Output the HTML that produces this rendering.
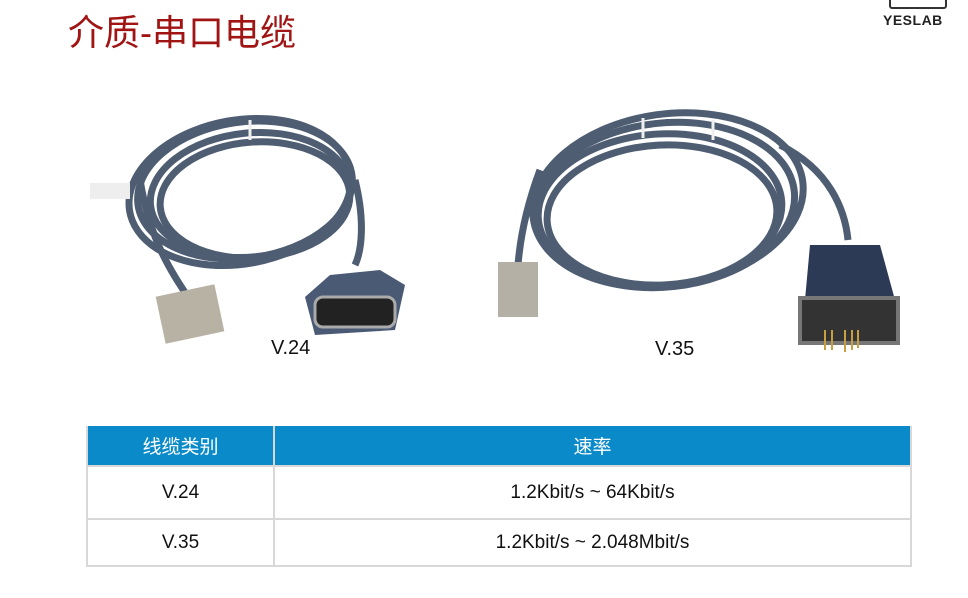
<!DOCTYPE html>
<html><head><meta charset="utf-8"><style>
body{margin:0;width:968px;height:598px;background:#fff;position:relative;overflow:hidden;font-family:"Liberation Sans","Noto Sans CJK SC",sans-serif}
.t{position:absolute;left:68px;top:4px;font-size:36px;color:#a01414}
.logo{position:absolute;left:883px;top:12px;font-size:14px;font-weight:bold;color:#222;letter-spacing:0.5px}
.lb{position:absolute;left:889px;top:-4px;width:54px;height:9px;border:2px solid #333;border-radius:3px}
table{position:absolute;left:86px;top:426px;width:826px;border-collapse:collapse;table-layout:fixed}
td{border:2px solid #d8d8d8;text-align:center;font-size:19px;color:#111;padding:0}
th{background:#0a8ac8;color:#fff;font-weight:normal;font-size:19px;height:39px;border:2px solid #d8d8d8;border-top:none;padding:0}
.cap{position:absolute;font-size:20px;color:#111}
</style></head><body>
<div class="t">介质-串口电缆</div>
<div class="lb"></div><div class="logo">YESLAB</div>
<svg width="968" height="420" style="position:absolute;left:0;top:0">
<g fill="none" stroke="#4e5d72" stroke-width="7">
<ellipse cx="245" cy="190" rx="108" ry="68" transform="rotate(-8 245 190)"/>
<ellipse cx="250" cy="195" rx="100" ry="62" transform="rotate(-6 250 195)"/>
<ellipse cx="240" cy="192" rx="112" ry="72" transform="rotate(-10 240 192)"/>
<ellipse cx="255" cy="200" rx="95" ry="58" transform="rotate(-4 255 200)"/>
<path d="M140 180 C150 240 170 270 190 300"/>
<path d="M355 180 C365 220 362 250 355 265"/>
<ellipse cx="665" cy="205" rx="130" ry="82" transform="rotate(-6 665 205)"/>
<ellipse cx="660" cy="210" rx="122" ry="76" transform="rotate(-4 660 210)"/>
<ellipse cx="668" cy="200" rx="136" ry="86" transform="rotate(-8 668 200)"/>
<ellipse cx="662" cy="215" rx="115" ry="70" transform="rotate(-3 662 215)"/>
<path d="M540 170 C525 210 520 240 518 265"/>
<path d="M780 145 C830 170 845 210 848 240"/>
</g>
<g stroke="#eee" stroke-width="3"><line x1="250" y1="120" x2="250" y2="140"/><line x1="643" y1="118" x2="643" y2="138"/><line x1="713" y1="120" x2="713" y2="140"/></g>
<rect x="90" y="183" width="40" height="16" fill="#eee"/>
<rect x="160" y="290" width="60" height="48" fill="#b8b2a4" transform="rotate(-12 190 314)"/>
<path d="M305 297 L330 275 L380 270 L405 285 L395 330 L315 335 Z" fill="#4a5a74"/>
<rect x="315" y="297" width="80" height="30" rx="8" fill="#222" stroke="#aaa" stroke-width="3"/>
<rect x="498" y="262" width="40" height="55" fill="#b5b0a6"/>
<path d="M810 245 L880 245 L895 300 L805 300 Z" fill="#2c3a55"/>
<rect x="800" y="298" width="98" height="45" fill="#333" stroke="#777" stroke-width="4"/>
<g stroke="#c9a040" stroke-width="2"><line x1="825" y1="330" x2="825" y2="350"/><line x1="832" y1="330" x2="832" y2="350"/><line x1="845" y1="330" x2="845" y2="352"/><line x1="852" y1="330" x2="852" y2="350"/><line x1="858" y1="330" x2="858" y2="348"/></g>
</svg>
<div class="cap" style="left:271px;top:337px">V.24</div>
<div class="cap" style="left:655px;top:338px">V.35</div>
<table>
<tr><th style="width:185px">线缆类别</th><th>速率</th></tr>
<tr><td style="height:51px">V.24</td><td>1.2Kbit/s ~ 64Kbit/s</td></tr>
<tr><td style="height:45px">V.35</td><td>1.2Kbit/s ~ 2.048Mbit/s</td></tr>
</table>
</body></html>
